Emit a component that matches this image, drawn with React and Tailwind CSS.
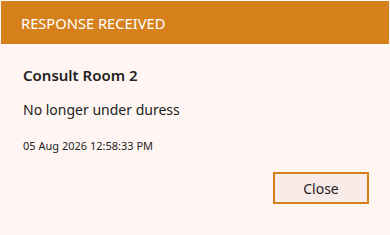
export default function App() {
  return (
    <div
      className="w-[390px] h-[235px] bg-[#fff6f3] p-px flex flex-col"
      style={{ fontFamily: '"Noto Sans", "Open Sans", sans-serif' }}
    >
      <div className="h-[43px] bg-[#d6801b] flex items-center px-5 pt-px">
        <h2 className="text-white text-[14.7px] leading-none">RESPONSE RECEIVED</h2>
      </div>
      <div className="flex flex-col px-[22px] pt-[21px]">
        <h3 className="text-[15px] font-semibold text-[#222] leading-5">Consult Room 2</h3>
        <p className="text-[14px] text-[#222] leading-5 mt-[15px]">No longer under duress</p>
        <p className="text-[11px] text-[#222] leading-4 mt-[18px]">05 Aug 2026 12:58:33 PM</p>
        <div className="flex justify-end mt-[18px]">
          <button className="w-[96px] h-[32px] border-2 border-[#d6801b] bg-[#f9ece8] text-[14px] text-[#222] mr-[-2px]">
            Close
          </button>
        </div>
      </div>
    </div>
  );
}
